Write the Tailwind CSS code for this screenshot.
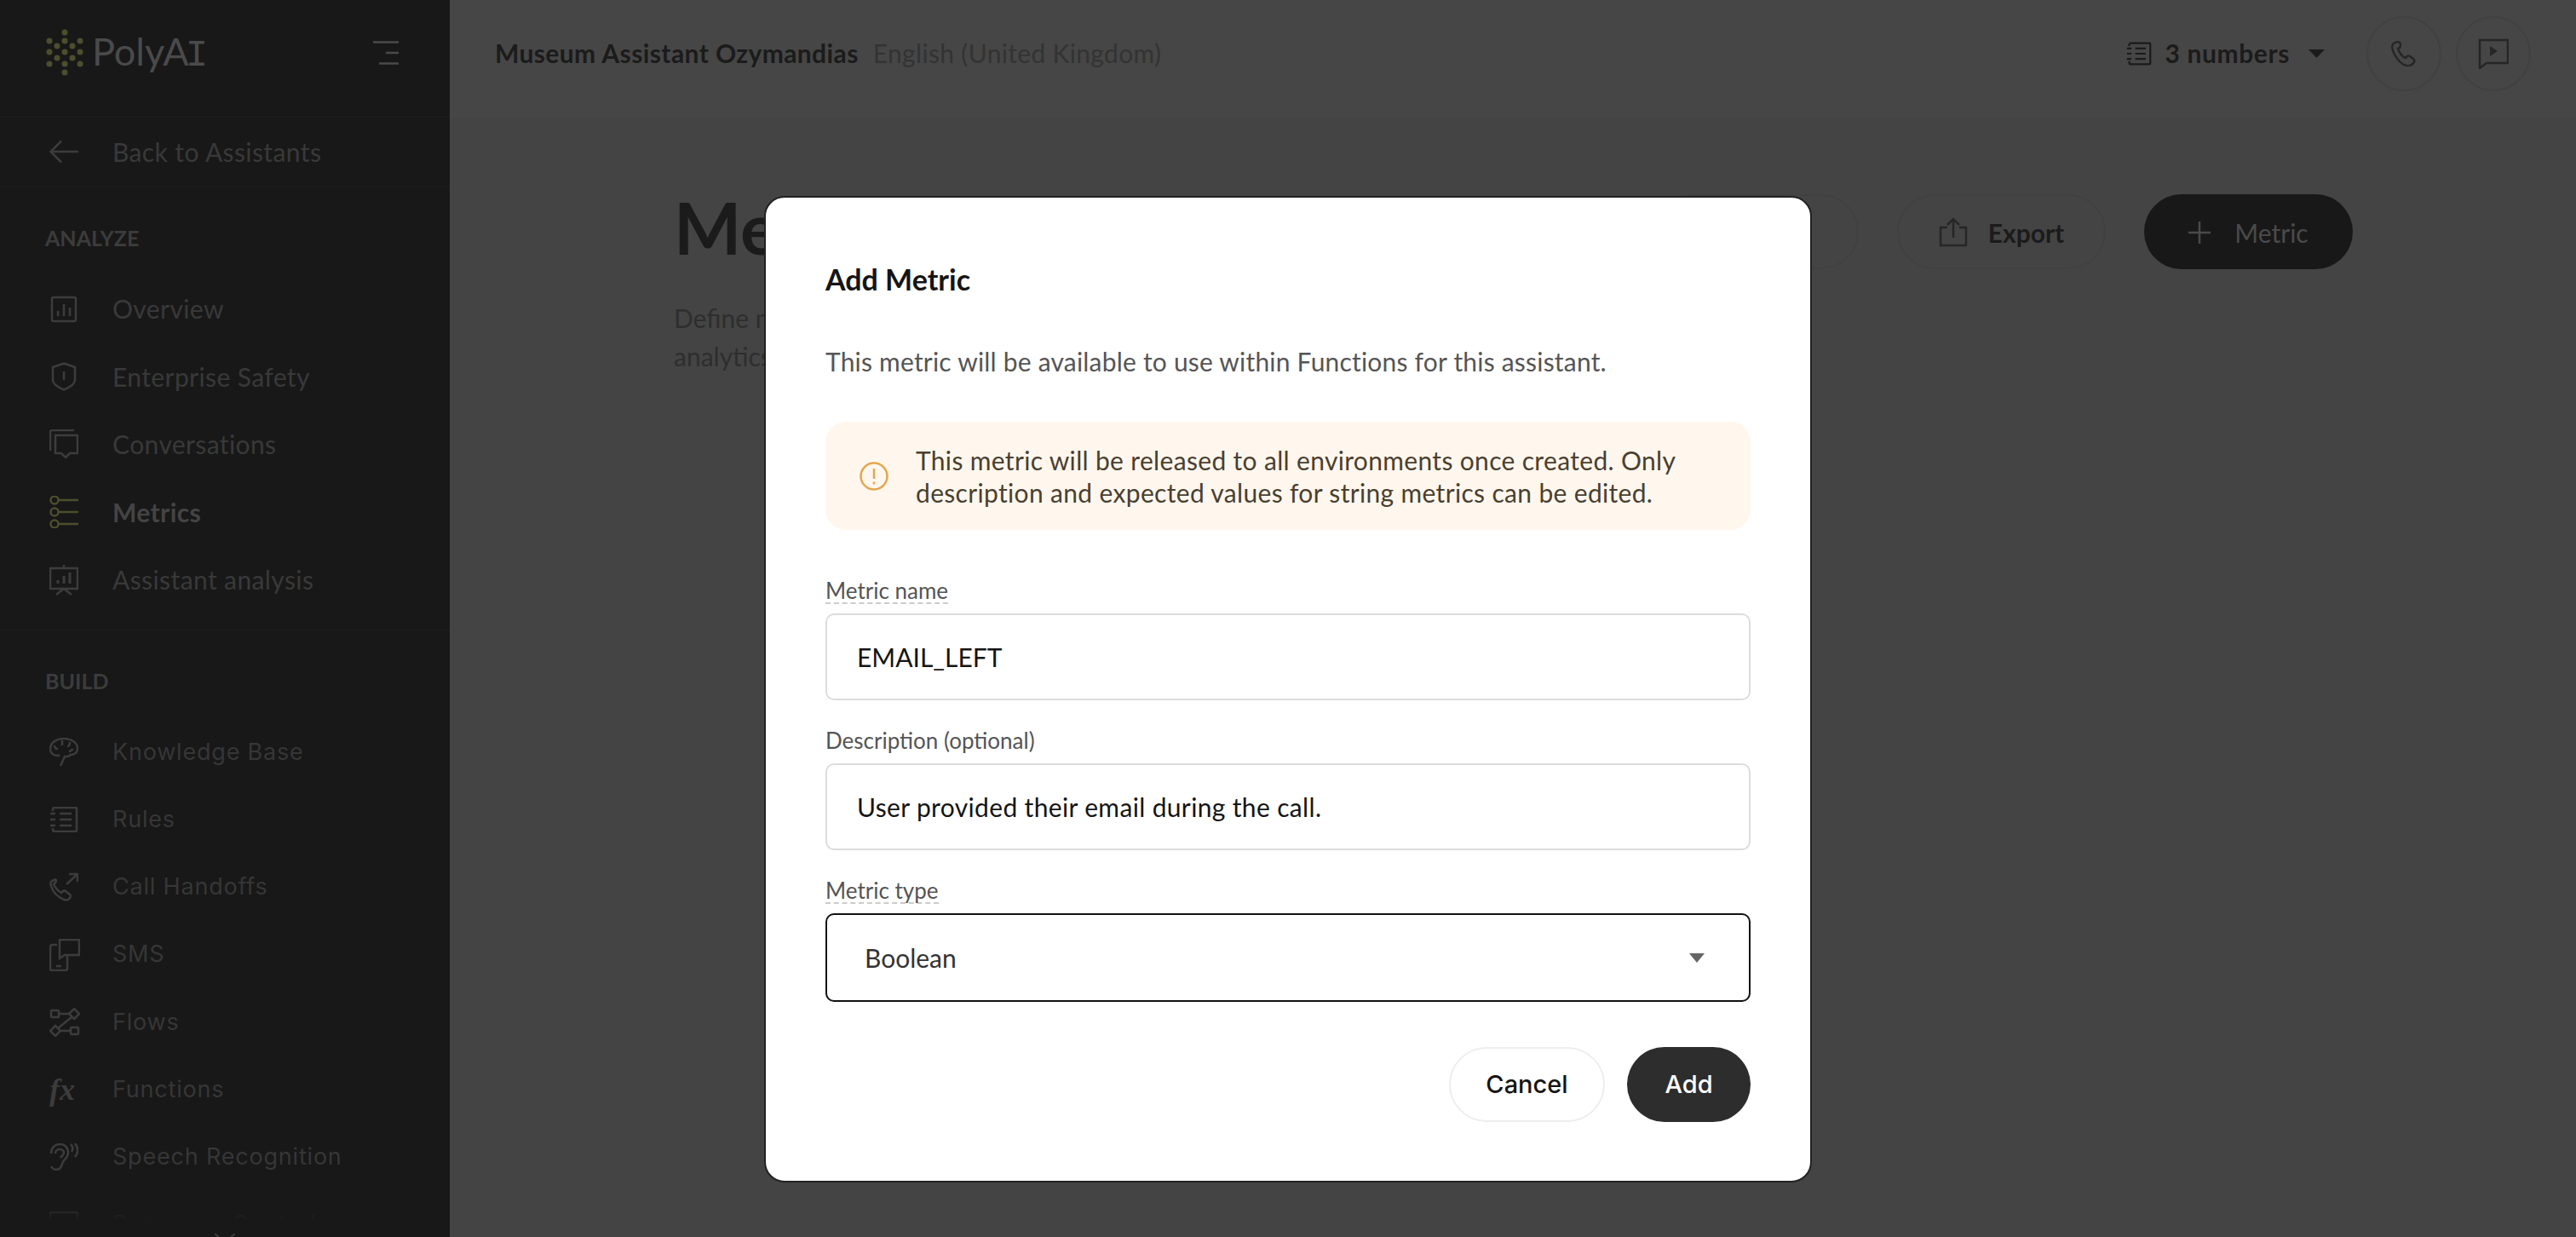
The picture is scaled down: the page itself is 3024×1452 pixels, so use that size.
<!DOCTYPE html>
<html lang="en">
<head>
<meta charset="UTF-8" />
<title>Metrics</title>
<script src="https://cdn.jsdelivr.net/npm/@tailwindcss/browser@4"></script>
</head>
<body class="w-[3024px] h-[1452px] overflow-hidden bg-[#444444] font-['Lato',sans-serif]">
<div class="relative flex h-[1452px]">

  <!-- sidebar -->
  <aside class="relative w-[528px] h-[1452px] shrink-0 overflow-hidden bg-[#181818] text-[30px] tracking-[0.4px] text-[#393939]">
    <div class="flex h-[138px] items-center justify-between pl-[53px] pr-[60px] pb-[12px] border-b-2 border-[#1c1c1c]">
      <div class="flex items-center gap-[9px]">
        <svg width="46" height="56" viewBox="0 0 46 56" fill="#4c4e2d">
          <circle cx="23" cy="4" r="3.5"/><circle cx="23" cy="14" r="3.5"/><circle cx="23" cy="27" r="3.5"/><circle cx="23" cy="41" r="3.5"/><circle cx="23" cy="51" r="3.5"/>
          <circle cx="5" cy="14" r="3.5"/><circle cx="5" cy="27" r="3.5"/><circle cx="5" cy="41" r="3.5"/>
          <circle cx="41" cy="14" r="3.5"/><circle cx="41" cy="27" r="3.5"/><circle cx="41" cy="41" r="3.5"/>
          <circle cx="14" cy="20" r="3.5"/><circle cx="14" cy="34" r="3.5"/><circle cx="32" cy="20" r="3.5"/><circle cx="32" cy="34" r="3.5"/>
        </svg>
        <span class="text-[45px] leading-none text-[#4a4a4a] tracking-normal">PolyA<span class="-mx-[4px] font-['Liberation_Mono',monospace] text-[44px]">I</span></span>
      </div>
      <svg width="30" height="28" viewBox="0 0 30 28" fill="none" stroke="#4a4a4a" stroke-width="2.5"><path d="M0 1.5h30M15 14h15M7 26.5h23"/></svg>
    </div>
    <div class="flex h-[82px] items-center gap-[40px] pl-[58px] border-b-2 border-[#1c1c1c]">
      <svg width="34" height="28" viewBox="0 0 34 28" fill="none" stroke="#3c3c3c" stroke-width="2.5"><path d="M34 14H2M14 1.5L1.5 14L14 26.5"/></svg>
      <span>Back to Assistants</span>
    </div>

    <div class="pl-[53px] mt-[40px] h-[40px] flex items-center text-[25px] font-bold tracking-normal text-[#3c3c3c]">ANALYZE</div>
    <nav class="mt-[23px] flex flex-col">
      <a class="flex h-[79.5px] items-center gap-[40px] pl-[58px]">
        <svg width="34" height="34" viewBox="0 0 34 34" fill="none" stroke="#3c3c3c" stroke-width="2.5"><rect x="3" y="3" width="28" height="28" rx="2"/><path d="M10 25v-6M17 25V11M24 25v-10"/></svg>
        <span>Overview</span>
      </a>
      <a class="flex h-[79.5px] items-center gap-[40px] pl-[58px]">
        <svg width="34" height="34" viewBox="0 0 34 34" fill="none" stroke="#3c3c3c" stroke-width="2.5"><path d="M17 1.5L30 6v15c0 4-6 8.500-13 11.500C10 29.500 4 25 4 21V6z"/><path d="M17 11v10"/></svg>
        <span>Enterprise Safety</span>
      </a>
      <a class="flex h-[79.5px] items-center gap-[40px] pl-[58px]">
        <svg width="34" height="36" viewBox="0 0 34 36" fill="none" stroke="#3c3c3c" stroke-width="2.5"><path d="M1 25V3a2 2 0 0 1 2-2h26"/><path d="M7 7h26v21H24l-5 5-5-5H7z"/></svg>
        <span>Conversations</span>
      </a>
      <a class="flex h-[79.5px] items-center gap-[40px] pl-[58px] font-bold text-[#444444]">
        <svg width="34" height="38" viewBox="0 0 34 38" fill="none" stroke="#4c4e2d" stroke-width="2.5"><circle cx="6" cy="5" r="4.500"/><circle cx="6" cy="19" r="4.500"/><circle cx="6" cy="33" r="4.500"/><path d="M11 5h23M11 19h23M11 33h23"/></svg>
        <span>Metrics</span>
      </a>
      <a class="flex h-[79.5px] items-center gap-[40px] pl-[58px]">
        <svg width="34" height="36" viewBox="0 0 34 36" fill="none" stroke="#3c3c3c" stroke-width="2.5"><path d="M1 4h32v24H1zM17 4V0M8 35l9-7 9 7"/><path d="M10 22v-4M17 22V13M24 22V9" stroke-width="3"/></svg>
        <span>Assistant analysis</span>
      </a>
    </nav>
    <div class="mt-[18px] border-t-2 border-[#1c1c1c]"></div>

    <div class="pl-[53px] mt-[39px] h-[40px] flex items-center text-[25px] font-bold tracking-normal text-[#3c3c3c]">BUILD</div>
    <nav class="mt-[24px] flex flex-col font-['Inter',sans-serif] text-[27px] tracking-[0.8px] text-[#363636]">
      <a class="flex h-[79.2px] items-center gap-[40px] pl-[58px]">
        <svg width="34" height="34" viewBox="0 0 34 34" fill="none" stroke="#3c3c3c" stroke-width="2.5"><path d="M13 33l5-11h3c2 0 3-1 4-2 5 0 8-3 8-8 0-6-7-11-16-11S1 6 1 13c0 5 4 8 8 8 1 0 2 0 3-1"/><path d="M6 9c0 3 2 4 4 4M15 3v6M24 5c0 3-1 5-3 5M28 14c-2 0-4 1-4 3"/></svg>
        <span>Knowledge Base</span>
      </a>
      <a class="flex h-[79.2px] items-center gap-[40px] pl-[58px]">
        <svg width="34" height="30" viewBox="0 0 34 30" fill="none" stroke="#3c3c3c" stroke-width="2.5"><path d="M4 5V3a2 2 0 0 1 2-2h25a1 1 0 0 1 1 1v26a1 1 0 0 1-1 1H6a2 2 0 0 1-2-2v-2M1 8h6M1 15h6M1 22h6M12 8h14M12 15h14M12 22h14"/></svg>
        <span>Rules</span>
      </a>
      <a class="flex h-[79.2px] items-center gap-[40px] pl-[58px]">
        <svg width="34" height="34" viewBox="0 0 34 34" fill="none" stroke="#3c3c3c" stroke-width="2.5"><path d="M8 8L3 10c-2 1-2 3-1 6 2 7 8 13 15 16 3 1 6 0 7-2 1-1 1-3 0-4l-5-4c-1-1-2-1-3 0l-2 2c-4-2-7-6-9-10l2-2c1-1 1-2 1-3L6 8"/><path d="M20 14L33 2M23 2h10v9"/></svg>
        <span>Call Handoffs</span>
      </a>
      <a class="flex h-[79.2px] items-center gap-[40px] pl-[58px]">
        <svg class="shrink-0" width="36" height="38" viewBox="0 0 36 38" fill="none" stroke="#3c3c3c" stroke-width="2.5"><path d="M9 7H3a2 2 0 0 0-2 2v26a2 2 0 0 0 2 2h16a2 2 0 0 0 2-2V20"/><path d="M12 1h23v18H18l-6 4zM8 32h6"/></svg>
        <span class="-ml-[2px]">SMS</span>
      </a>
      <a class="flex h-[79.2px] items-center gap-[40px] pl-[58px]">
        <svg class="shrink-0" width="36" height="34" viewBox="0 0 36 34" fill="none" stroke="#3c3c3c" stroke-width="2.5"><rect x="2" y="3" width="9" height="8" rx="1"/><path d="M29 1l6 6-6 6-6-6zM7 21l6 6-6 6-6-6zM11 7h12M26 11L10 24M13 27h12"/><rect x="25" y="23" width="9" height="8" rx="1"/></svg>
        <span class="-ml-[2px]">Flows</span>
      </a>
      <a class="flex h-[79.2px] items-center gap-[40px] pl-[58px]">
        <span class="w-[34px] font-['Liberation_Serif',serif] italic font-bold text-[36px] tracking-normal text-[#3c3c3c] leading-none">fx</span>
        <span>Functions</span>
      </a>
      <a class="flex h-[79.2px] items-center gap-[40px] pl-[58px]">
        <svg width="34" height="32" viewBox="0 0 34 32" fill="none" stroke="#3c3c3c" stroke-width="2.5"><path d="M2 12C2 6 6 1 12 1s10 4 10 10c0 7-6 8-7 13-1 5-3 7-7 7-3 0-5-2-6-4"/><path d="M7 12c0-3 2-5 5-5s5 2 5 4c0 3-3 4-4 6"/><path d="M25 1c3 3 3 6 1 9M30 0c4 5 4 11 0 16"/></svg>
        <span>Speech Recognition</span>
      </a>
      <a class="flex h-[79.2px] items-center gap-[40px] pl-[58px]">
        <svg width="34" height="30" viewBox="0 0 34 30" fill="none" stroke="#3c3c3c" stroke-width="2.5"><rect x="1" y="1" width="32" height="28" rx="2"/></svg>
        <span>Response Control</span>
      </a>
    </nav>
    <div class="absolute left-0 right-0 bottom-0 h-[32px] bg-gradient-to-b from-[#181818]/50 to-[#181818] to-40%"></div>
    <svg class="absolute left-[252px] bottom-0" width="24" height="4" viewBox="0 0 24 4" fill="none" stroke="#3c3c3c" stroke-width="2"><path d="M0 0l5 4M24 0l-5 4"/></svg>
  </aside>

  <!-- main -->
  <main class="flex-1 min-w-0">
    <header class="flex h-[138px] items-center justify-between pl-[53px] pr-[53px] pb-[13px] bg-[#464646]">
      <div class="flex items-center gap-[17px]">
        <span class="text-[30px] font-bold tracking-[0.4px] text-[#1b1b1b]">Museum Assistant Ozymandias</span>
        <span class="text-[30px] tracking-[0.33px] text-[#333333]">English (United Kingdom)</span>
      </div>
      <div class="flex items-center">
        <svg width="30" height="30" viewBox="0 0 34 30" fill="none" stroke="#1b1b1b" stroke-width="2.5"><path d="M4 5V3a2 2 0 0 1 2-2h25a1 1 0 0 1 1 1v26a1 1 0 0 1-1 1H6a2 2 0 0 1-2-2v-2M1 8h6M1 15h6M1 22h6M12 8h14M12 15h14M12 22h14"/></svg>
        <span class="ml-[16px] text-[30px] font-bold tracking-[0.6px] text-[#1b1b1b]">3 numbers</span>
        <svg class="ml-[22px]" width="19" height="10" viewBox="0 0 19 10" fill="#1b1b1b"><path d="M0 0h19l-9.500 10z"/></svg>
        <div class="ml-[49px] w-[88px] h-[88px] rounded-full border-2 border-[#414141] flex items-center justify-center">
          <svg width="30" height="30" viewBox="0 0 30 30" fill="none" stroke="#262626" stroke-width="2.500"><path d="M7 1L3 3C0 5 1 10 4 16c4 7 9 12 14 13 4 1 7-1 9-4 1-2 0-3-1-4l-4-3c-2-1-3-1-4 1l-1 1c-4-1-8-7-9-11l2-1c1-1 1-2 1-4L10 2C9 1 8 1 7 1z"/></svg>
        </div>
        <div class="ml-[17px] w-[88px] h-[88px] rounded-full border-2 border-[#414141] flex items-center justify-center">
          <svg width="36" height="36" viewBox="0 0 36 36" fill="none" stroke="#262626" stroke-width="2.500"><path d="M2 2h33v27H10l-8 6z"/><path d="M14 9l9 6-9 6z" fill="#262626" stroke="none"/></svg>
        </div>
      </div>
    </header>
    <section class="flex items-start justify-between pl-[263px] pr-[262px] pt-[90px]">
      <div>
        <h1 class="mt-[4px] text-[84px] leading-[70px] font-bold text-[#1b1b1b]">Metrics</h1>
        <p class="mt-[49px] text-[30px] leading-[45px] text-[#2e2e2e]">Define m<br>analytics</p>
      </div>
      <div class="flex items-center gap-[45px]">
        <div class="h-[88px] w-[240px] rounded-full border-2 border-[#414141]"></div>
        <button class="flex h-[88px] w-[245px] items-center justify-center gap-[24px] rounded-full border-2 border-[#414141] pt-[2px] text-[30px] font-bold text-[#1b1b1b]">
          <svg width="34" height="34" viewBox="0 0 34 34" fill="none" stroke="#262626" stroke-width="2.500"><path d="M10 11H2v21h30V11h-8M17 23V2M10 8l7-7 7 7"/></svg>
          Export
        </button>
        <button class="flex h-[88px] w-[245px] items-center justify-center gap-[28px] rounded-full bg-[#181818] pt-[2px] text-[30px] text-[#4a4a4a]">
          <svg width="26" height="26" viewBox="0 0 26 26" fill="none" stroke="#4a4a4a" stroke-width="2.500"><path d="M13 0v26M0 13h26"/></svg>
          Metric
        </button>
      </div>
    </section>
  </main>

  <!-- modal -->
  <div class="absolute left-[897px] top-[230px] w-[1230px] h-[1158px] rounded-[24px] border-2 border-[#222222] bg-white px-[70px]">
    <h2 class="mt-[72px] h-[46px] flex items-center text-[34px] font-bold text-[#151515]">Add Metric</h2>
    <p class="mt-[52px] h-[44px] flex items-center text-[30px] tracking-[0.2px] text-[#555555]">This metric will be available to use within Functions for this assistant.</p>
    <div class="mt-[49px] flex h-[127px] items-center gap-[32px] rounded-[24px] bg-[#fff7ee] pl-[40px] pr-[40px]">
      <svg class="shrink-0" width="34" height="34" viewBox="0 0 34 34" fill="none" stroke="#e5a64f" stroke-width="2.500"><circle cx="17" cy="17" r="15.500"/><path d="M17 8v12M17 23.500v3"/></svg>
      <p class="text-[30px] leading-[38px] tracking-[0.33px] text-[#4a3f2f]">This metric will be released to all environments once created. Only description and expected values for string metrics can be edited.</p>
    </div>
    <label class="mt-[57px] block w-fit h-[28px] leading-[28px] text-[26px] text-[#555555] border-b-2 border-dashed border-[#cccccc] box-content">Metric name</label>
    <div class="mt-[11px] flex h-[102px] items-center rounded-[10px] border-2 border-[#dddddd] pl-[35px] text-[30px] text-[#151515]">EMAIL_LEFT</div>
    <label class="mt-[33px] block h-[28px] leading-[28px] text-[26px] text-[#555555]">Description (optional)</label>
    <div class="mt-[13px] flex h-[102px] items-center rounded-[10px] border-2 border-[#dddddd] pl-[35px] text-[30px] tracking-[0.35px] text-[#151515]">User provided their email during the call.</div>
    <label class="mt-[33px] block w-fit h-[28px] leading-[28px] text-[26px] text-[#555555] border-b-2 border-dashed border-[#cccccc] box-content">Metric type</label>
    <div class="mt-[11px] flex h-[104px] items-center justify-between rounded-[10px] border-2 border-[#111111] pl-[44px] pr-[52px] text-[30px] text-[#333333]">
      Boolean
      <svg width="18" height="11" viewBox="0 0 18 11" fill="#666666"><path d="M0 0h18l-9 11z"/></svg>
    </div>
    <div class="mt-[53px] flex justify-end gap-[26px]">
      <button class="h-[88px] w-[183px] rounded-full border-2 border-[#eeeeee] font-['Inter',sans-serif] text-[29px] font-medium text-[#151515]">Cancel</button>
      <button class="h-[88px] w-[145px] rounded-full bg-[#2d2d2d] font-['Inter',sans-serif] text-[29px] font-medium text-white">Add</button>
    </div>
  </div>
</div>
</body>
</html>
